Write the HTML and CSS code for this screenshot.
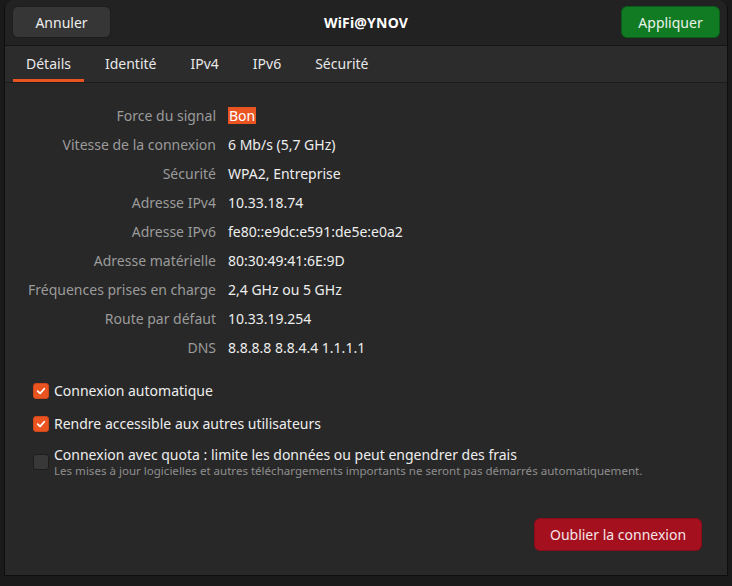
FILE: index.html
```html
<!DOCTYPE html>
<html lang="fr">
<head>
<meta charset="utf-8">
<title>WiFi@YNOV</title>
<link rel="stylesheet" href="styles.css">
</head>
<body>
<div class="desktop">
  <div class="dialog">
    <header class="headerbar">
      <button class="btn btn-cancel">Annuler</button>
      <div class="title">WiFi@YNOV</div>
      <button class="btn btn-apply">Appliquer</button>
    </header>
    <nav class="tabs">
      <div class="tab active">Détails</div>
      <div class="tab">Identité</div>
      <div class="tab">IPv4</div>
      <div class="tab">IPv6</div>
      <div class="tab">Sécurité</div>
    </nav>
    <main class="content">
      <div class="details">
        <div class="label">Force du signal</div><div class="value"><span class="hl">Bon</span></div>
        <div class="label">Vitesse de la connexion</div><div class="value">6 Mb/s (5,7 GHz)</div>
        <div class="label">Sécurité</div><div class="value">WPA2, Entreprise</div>
        <div class="label">Adresse IPv4</div><div class="value">10.33.18.74</div>
        <div class="label">Adresse IPv6</div><div class="value">fe80::e9dc:e591:de5e:e0a2</div>
        <div class="label">Adresse matérielle</div><div class="value">80:30:49:41:6E:9D</div>
        <div class="label">Fréquences prises en charge</div><div class="value">2,4 GHz ou 5 GHz</div>
        <div class="label">Route par défaut</div><div class="value">10.33.19.254</div>
        <div class="label">DNS</div><div class="value">8.8.8.8 8.8.4.4 1.1.1.1</div>
      </div>
      <div class="checks">
        <div class="check check-1">
          <span class="box checked"><svg viewBox="0 0 16 16" width="16" height="16"><path d="M4.2 8.2 L7 10.8 L11.8 5.4" fill="none" stroke="#fff" stroke-width="2" stroke-linecap="round" stroke-linejoin="round"/></svg></span>
          <span class="check-text">Connexion automatique</span>
        </div>
        <div class="check check-2">
          <span class="box checked"><svg viewBox="0 0 16 16" width="16" height="16"><path d="M4.2 8.2 L7 10.8 L11.8 5.4" fill="none" stroke="#fff" stroke-width="2" stroke-linecap="round" stroke-linejoin="round"/></svg></span>
          <span class="check-text">Rendre accessible aux autres utilisateurs</span>
        </div>
        <div class="check check-3">
          <span class="box"></span>
          <span class="check-text">
            <span class="check-title">Connexion avec quota : limite les données ou peut engendrer des frais</span>
            <span class="check-sub">Les mises à jour logicielles et autres téléchargements importants ne seront pas démarrés automatiquement.</span>
          </span>
        </div>
      </div>
      <div class="footer">
        <button class="btn btn-forget">Oublier la connexion</button>
      </div>
    </main>
  </div>
</div>
</body>
</html>
```

FILE: styles.css
```css
* { box-sizing: border-box; }
html, body {
  margin: 0;
  padding: 0;
  background: #1a1a1a;
  width: 732px;
  height: 586px;
  overflow: hidden;
  font-family: "Noto Sans", "Open Sans", sans-serif;
}
.desktop {
  padding-left: 4px;
  width: 732px;
  height: 586px;
}
.dialog {
  width: 724px;
  height: 576px;
  background: #282828;
  border: 1px solid #0e0e0e;
  border-top: none;
  border-radius: 9px 9px 0 0;
  display: flex;
  flex-direction: column;
  overflow: hidden;
}
.headerbar {
  height: 46px;
  flex: none;
  background: #222222;
  border-bottom: 1px solid #161616;
  display: flex;
  align-items: center;
  justify-content: space-between;
  padding: 0 7px 1px 7px;
}
.btn {
  font-family: inherit;
  font-size: 14px;
  border-radius: 6px;
  height: 32px;
  padding: 0;
  cursor: default;
}
.btn-cancel {
  width: 99px;
  background: #363636;
  color: #eeeeee;
  border: 1px solid #1e1e1e;
}
.btn-apply {
  width: 99px;
  background: #117b24;
  color: #e9f3ea;
  border: 1px solid #0b5c1a;
}
.title {
  color: #ffffff;
  font-weight: 700;
  font-size: 14px;
  letter-spacing: 0.2px;
}
.tabs {
  height: 37px;
  flex: none;
  background: #2c2c2c;
  border-bottom: 1px solid #1c1c1c;
  display: flex;
  align-items: stretch;
  padding-left: 8px;
  gap: 8px;
}
.tab {
  position: relative;
  padding: 0 13px;
  color: #e8e8e8;
  font-size: 14px;
  display: flex;
  align-items: center;
  padding-bottom: 1px;
}
.tab.active::after {
  content: "";
  position: absolute;
  left: 0;
  right: 0;
  bottom: 0;
  height: 3px;
  background: #e95420;
}
.content {
  flex: 1;
  display: flex;
  flex-direction: column;
  padding-top: 18px;
}
.details {
  display: grid;
  grid-template-columns: 211px 1fr;
  column-gap: 12px;
  grid-auto-rows: 29px;
  font-size: 14px;
}
.label {
  text-align: right;
  color: #9b9b9b;
  display: flex;
  align-items: center;
  justify-content: flex-end;
}
.value {
  color: #eeeeee;
  display: flex;
  align-items: center;
}
.hl {
  background: #e95420;
  color: #ffffff;
  line-height: 17px;
  padding: 0 1px;
}
.checks {
  margin-top: 19px;
  padding-left: 28px;
  display: flex;
  flex-direction: column;
  font-size: 14px;
  color: #eeeeee;
}
.check {
  display: flex;
  align-items: flex-start;
  gap: 5px;
}
.check-1, .check-2 { height: 20px; line-height: 20px; }
.check-1 .box, .check-2 .box { margin-top: 2px; }
.check-2 { margin-top: 13px; }
.check-3 { margin-top: 11px; }
.check-3 .box { margin-top: 9px; }
.box {
  width: 16px;
  height: 16px;
  flex: none;
  border-radius: 3px;
  background: #383838;
  border: 1px solid #1e1e1e;
  display: flex;
  align-items: center;
  justify-content: center;
}
.box.checked {
  background: #e95420;
  border-color: #d2461a;
}
.box svg { display: block; }
.check-text {
  display: flex;
  flex-direction: column;
}
.check-title { line-height: 20px; }
.check-sub {
  font-size: 11.55px;
  line-height: 11px;
  color: #8e8e8e;
}
.footer {
  margin-top: auto;
  display: flex;
  justify-content: flex-end;
  padding: 0 25px 24px 0;
}
.btn-forget {
  width: 168px;
  height: 33px;
  background: #a5101f;
  color: #f4e6e7;
  border: 1px solid #850c18;
}
```
